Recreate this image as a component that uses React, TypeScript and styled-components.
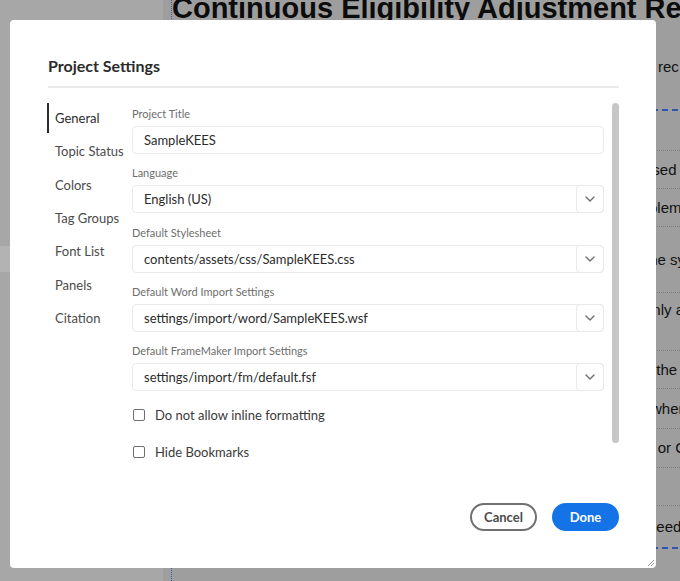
import React from "react";
import styled, { createGlobalStyle } from "styled-components";

const Global = createGlobalStyle`
  html, body { margin: 0; padding: 0; }
  body { width: 680px; height: 581px; overflow: hidden; background: #9e9e9e; }
  * { box-sizing: border-box; }
`;

const Page = styled.div`
  position: relative;
  width: 680px;
  height: 581px;
  display: flex;
  overflow: hidden;
  font-family: "Liberation Sans", Arial, sans-serif;
`;

const LeftPanel = styled.div`
  width: 163px;
  flex: none;
  background: #a7a7a7;
  display: flex;
  flex-direction: column;
  padding-top: 246px;
`;

const PanelItem = styled.div<{ $active?: boolean }>`
  height: 26px;
  width: 10px;
  background: ${(p) => (p.$active ? "#b3b3b3" : "transparent")};
`;

const Doc = styled.div`
  flex: 1;
  background: #9e9e9e;
  display: flex;
  flex-direction: column;
  border-left: 1px dotted #3b5bb0;
  margin-left: 8px;
`;

const Heading = styled.h1`
  margin: -10px 0 0 0;
  font-size: 29px;
  line-height: 36px;
  font-weight: 700;
  color: #0c0c0c;
  white-space: nowrap;
`;

const Para = styled.div`
  margin-top: 32px;
  display: grid;
  grid-template-columns: 486px 1fr;
  font-size: 15px;
  line-height: 18px;
  color: #111;
  white-space: nowrap;
`;

const Table = styled.div`
  margin-top: 33px;
  border-top: 2px dashed #2f55b0;
  border-bottom: 2px dashed #2f55b0;
  display: flex;
  flex-direction: column;
`;

const Row = styled.div<{ $h: number; $top?: boolean; $last?: boolean }>`
  height: ${(p) => p.$h}px;
  display: grid;
  grid-template-columns: 482px 1fr;
  align-items: ${(p) => (p.$top ? "start" : "center")};
  padding-top: ${(p) => (p.$top ? "8px" : "0")};
  border-bottom: ${(p) => (p.$last ? "none" : "1px dotted #7d7d7d")};
  font-size: 15px;
  line-height: 18px;
  color: #111;
  white-space: nowrap;
  overflow: hidden;
`;

const Cell = styled.span<{ $shift: number }>`
  margin-left: ${(p) => -p.$shift}px;
`;

const Overlay = styled.div`
  position: absolute;
  left: 10px;
  top: 20px;
  width: 646px;
  height: 548px;
  background: #fff;
  border-radius: 4px;
  display: flex;
  flex-direction: column;
  padding: 0 37px 37px 38px;
  font-family: Lato, "Open Sans", sans-serif;
`;

const Header = styled.div`
  padding: 36px 0 10px;
  border-bottom: 2px solid #eaeaea;
`;

const Title = styled.h2`
  margin: 0;
  font-size: 16px;
  font-weight: 700;
  color: #2c2c2c;
  line-height: 20px;
`;

const Body = styled.div`
  margin-top: 15px;
  height: 340px;
  display: flex;
`;

const Nav = styled.nav`
  width: 85px;
  margin-left: -1px;
  display: flex;
  flex-direction: column;
  gap: 3.33px;
`;

const NavItem = styled.div<{ $active?: boolean }>`
  height: 30px;
  display: flex;
  align-items: center;
  padding-left: 6px;
  font-size: 13px;
  color: ${(p) => (p.$active ? "#2c2c2c" : "#4b4b4b")};
  border-left: 2px solid ${(p) => (p.$active ? "#2c2c2c" : "transparent")};
  white-space: nowrap;
`;

const Content = styled.div`
  width: 472px;
  padding-top: 3px;
  display: flex;
  flex-direction: column;
  gap: 11.25px;
`;

const Field = styled.div`
  display: flex;
  flex-direction: column;
  gap: 4px;
`;

const Label = styled.div`
  font-size: 11px;
  line-height: 16px;
  color: #6e6e6e;
`;

const Box = styled.div`
  height: 28px;
  border: 1px solid #e9e9e9;
  border-radius: 4px;
  display: flex;
  align-items: center;
  font-size: 13px;
  color: #2c2c2c;
`;

const BoxText = styled.div`
  flex: 1;
  padding-left: 11px;
  white-space: nowrap;
`;

const DropButton = styled.div`
  width: 28px;
  height: 28px;
  margin: -1px -1px -1px 0;
  border: 1px solid #e9e9e9;
  border-radius: 4px;
  display: flex;
  align-items: center;
  justify-content: center;
`;

const Checks = styled.div`
  margin-top: 4px;
  display: flex;
  flex-direction: column;
  gap: 19px;
`;

const CheckRow = styled.label`
  height: 18px;
  display: flex;
  align-items: center;
  gap: 10px;
  padding-left: 1px;
  font-size: 13px;
  color: #3a3a3a;
`;

const CheckBox = styled.span`
  width: 12px;
  height: 12px;
  border: 1.5px solid #6e6e6e;
  border-radius: 2px;
  flex: none;
`;

const Scrollbar = styled.div`
  margin-left: 8px;
  width: 7px;
  height: 340px;
  background: #c6c6c6;
  border-radius: 4px;
`;

const Footer = styled.div`
  margin-top: auto;
  display: flex;
  justify-content: flex-end;
  gap: 15px;
`;

const Button = styled.button<{ $primary?: boolean }>`
  height: 28px;
  width: 67px;
  border-radius: 14px;
  font-family: Lato, "Open Sans", sans-serif;
  font-size: 13px;
  font-weight: 700;
  padding: 0;
  border: 2px solid ${(p) => (p.$primary ? "#1473e6" : "#707070")};
  background: ${(p) => (p.$primary ? "#1473e6" : "#fff")};
  color: ${(p) => (p.$primary ? "#fff" : "#4b4b4b")};
`;

const Grip = styled.svg`
  position: absolute;
  right: 1px;
  bottom: 1px;
`;

const Chevron = () => (
  <svg width="10" height="6" viewBox="0 0 10 6">
    <path d="M1 1l4 4 4-4" fill="none" stroke="#6e6e6e" strokeWidth="1.4" strokeLinecap="round" strokeLinejoin="round" />
  </svg>
);

const navItems = ["General", "Topic Status", "Colors", "Tag Groups", "Font List", "Panels", "Citation"];

const fields: { label: string; value: string; select: boolean }[] = [
  { label: "Project Title", value: "SampleKEES", select: false },
  { label: "Language", value: "English (US)", select: true },
  { label: "Default Stylesheet", value: "contents/assets/css/SampleKEES.css", select: true },
  { label: "Default Word Import Settings", value: "settings/import/word/SampleKEES.wsf", select: true },
  { label: "Default FrameMaker Import Settings", value: "settings/import/fm/default.fsf", select: true },
];

const rows: { h: number; text: string; shift: number; top?: boolean }[] = [
  { h: 40, text: "", shift: 0 },
  { h: 38, text: "used", shift: 10 },
  { h: 38, text: "blem", shift: 5 },
  { h: 66, text: "the sy", shift: 9 },
  { h: 58, text: "only a", shift: 10, top: true },
  { h: 38, text: "f the", shift: 6 },
  { h: 40, text: "when", shift: 3 },
  { h: 39, text: "s or C", shift: 8 },
  { h: 38, text: "", shift: 0 },
  { h: 41, text: "needs", shift: 6 },
];

export default function App() {
  return (
    <>
      <Global />
      <Page>
        <LeftPanel>
          <PanelItem $active />
        </LeftPanel>
        <Doc>
          <Heading>Continuous Eligibility Adjustment Report</Heading>
          <Para>
            <span />
            <span>rec</span>
          </Para>
          <Table>
            {rows.map((r, i) => (
              <Row key={i} $h={r.h} $top={r.top} $last={i === rows.length - 1}>
                <span />
                <Cell $shift={r.shift}>{r.text}</Cell>
              </Row>
            ))}
          </Table>
        </Doc>
        <Overlay>
          <Header>
            <Title>Project Settings</Title>
          </Header>
          <Body>
            <Nav>
              {navItems.map((n, i) => (
                <NavItem key={n} $active={i === 0}>
                  {n}
                </NavItem>
              ))}
            </Nav>
            <Content>
              {fields.map((f) => (
                <Field key={f.label}>
                  <Label>{f.label}</Label>
                  <Box>
                    <BoxText>{f.value}</BoxText>
                    {f.select && (
                      <DropButton>
                        <Chevron />
                      </DropButton>
                    )}
                  </Box>
                </Field>
              ))}
              <Checks>
                <CheckRow>
                  <CheckBox />
                  Do not allow inline formatting
                </CheckRow>
                <CheckRow>
                  <CheckBox />
                  Hide Bookmarks
                </CheckRow>
              </Checks>
            </Content>
            <Scrollbar />
          </Body>
          <Footer>
            <Button>Cancel</Button>
            <Button $primary>Done</Button>
          </Footer>
          <Grip width="9" height="9" viewBox="0 0 9 9">
            <path d="M8 2L2 8M8 5L5 8" stroke="#9a9a9a" strokeWidth="1" />
          </Grip>
        </Overlay>
      </Page>
    </>
  );
}
